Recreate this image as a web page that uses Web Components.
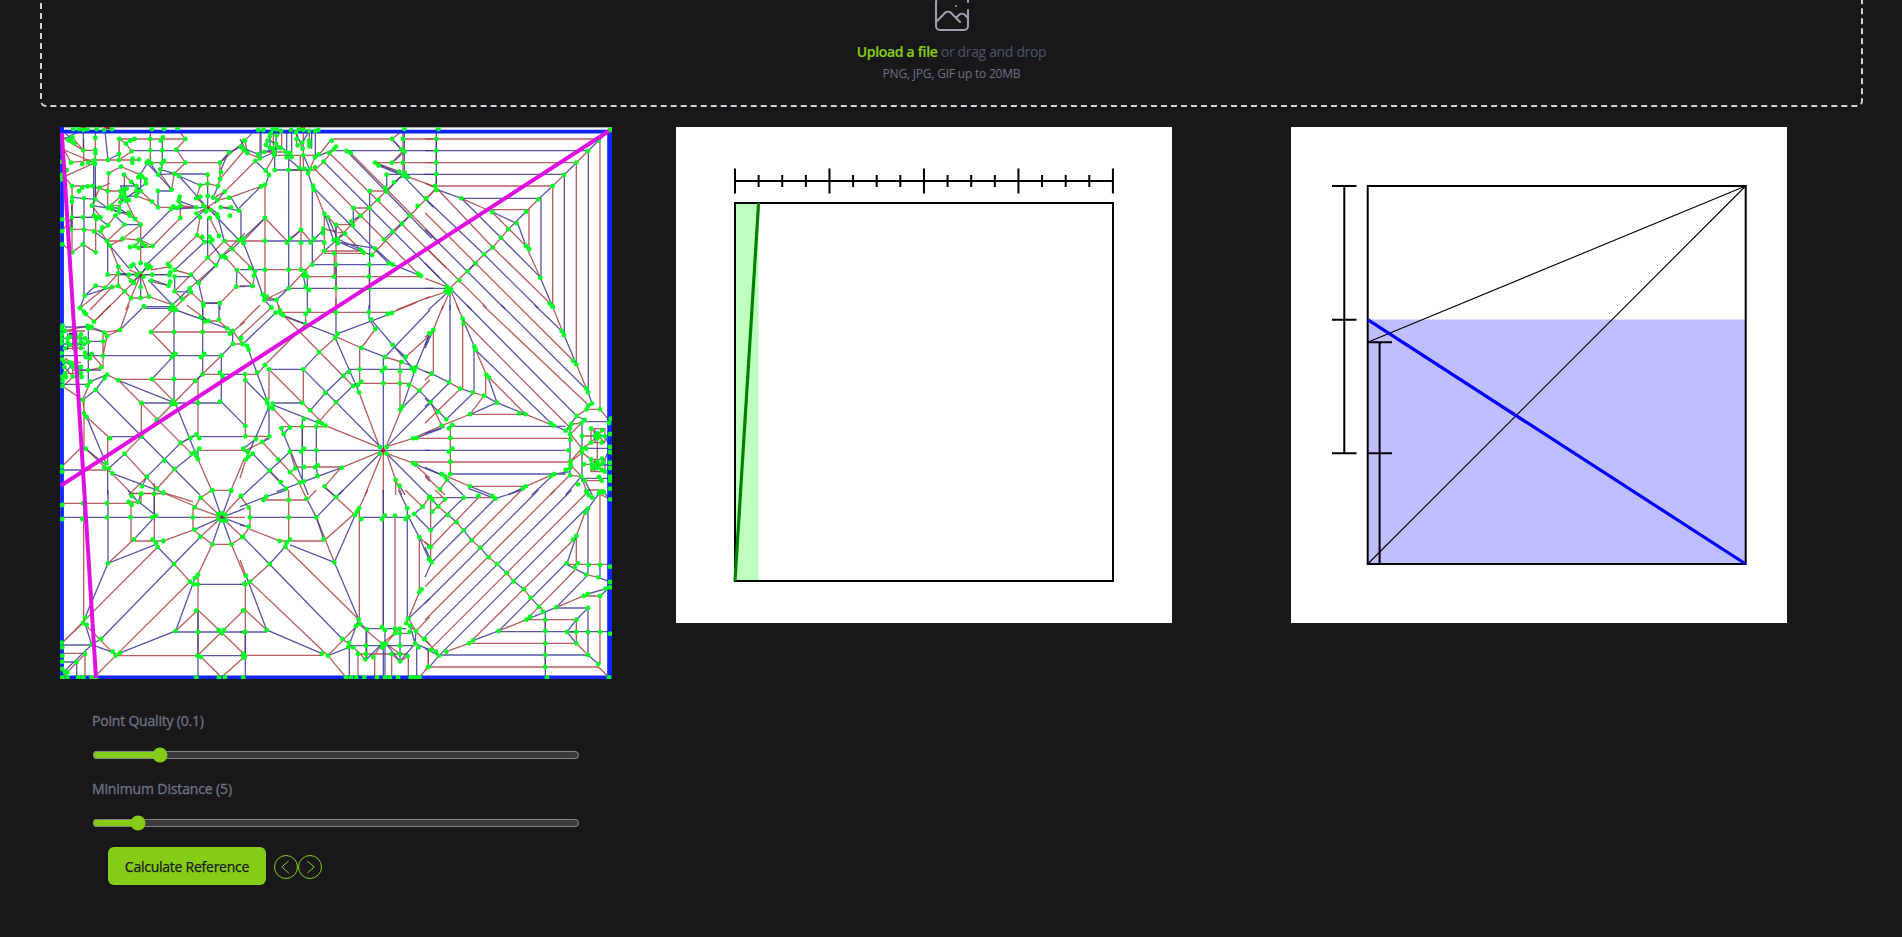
<!DOCTYPE html>
<html lang="en">
<head>
<meta charset="utf-8">
<title>Reference Finder</title>
<style>
html{background:#18181b;color-scheme:dark}
body{margin:0;background:#18181b;font-family:"Open Sans","Noto Sans",sans-serif;font-size:14px;line-height:20px;overflow:hidden;height:937px}
</style>
</head>
<body>
<reference-app></reference-app>
<script>
const define=(name,html,setup)=>customElements.define(name,class extends HTMLElement{
  connectedCallback(){
    if(this.shadowRoot)return;
    const t=document.createElement('template');
    t.innerHTML=typeof html==='function'?html(this):html;
    this.attachShadow({mode:'open'}).append(t.content.cloneNode(true));
    if(setup)setup(this);
  }
});

define('drop-zone',`<style>
:host{display:flex;flex-direction:column;align-items:center;justify-content:flex-end;box-sizing:border-box;height:127px;margin:-20px 39px 0 40px;border:2px dashed #d4d4d8;border-radius:6px;padding-bottom:23px}
svg{width:48px;height:48px;flex:none;color:#9ca3af}
.main{margin-top:4px;color:#4b5563;letter-spacing:-.34px;white-space:pre}
b{font-weight:600;color:#84cc16;letter-spacing:-.3px;-webkit-text-stroke:.2px #84cc16}
.hint{margin-top:4px;font-size:12px;line-height:16px;color:#6b7280;letter-spacing:-.2px}
</style>
<svg viewBox="0 0 48 48" fill="none" stroke="currentColor" stroke-width="2" stroke-linecap="round" stroke-linejoin="round"><path d="M28 8H12a4 4 0 00-4 4v20m32-12v8m0 0v8a4 4 0 01-4 4H12a4 4 0 01-4-4v-4m32-4l-3.172-3.172a4 4 0 00-5.656 0L28 28M8 32l9.172-9.172a4 4 0 015.656 0L28 28m0 0l4 4m4-24h8m-4-4v8m-12 4h.02"/></svg>
<div class="main"><b>Upload a file</b> or drag and drop</div>
<div class="hint">PNG, JPG, GIF up to 20MB</div>`);

/* Crease pattern, stored as 3x3 tiles of 185px at three units per pixel.
   r: mountain creases, b: valley creases, d: detected vertices. */
const tiles=[
{r:"M193 57H391L367 25M391 57L364 89L391 128M275 128H495M119 120H252M48 128L120 118M86 57V123M286 27V123M51 198V397L84 373L122 397M122 397V292M122 240V198M158 213V264M158 213L161 160M161 160L198 140L256 164M121 54V120M192 57V120M257 314V429M458 164V191M376 230V294L293 378M339 432L426 346M408 464L458 413M495 128V177L569 90M495 128L570 62M309 262H424M309 262L291 245L257 213M257 213L230 186L207 164M350 209L318 164M358 161L350 209M358 161L391 128M497 262H528M489 240L522 233L555 222M436 196L424 235M509 215L480 232M495 177L489 198L458 191L436 196M458 262L424 235M458 262L489 240M458 262L424 280M458 262L489 292M435 292L426 346M464 294L492 348M377 257L424 262M240 297L257 314L203 356M208 314L156 363L137 334M159 316L181 287M171 268L225 287M156 363L165 377L190 440V498M156 363H203M165 377L203 356M240 378L257 360L293 378M225 381H293M158 464H345M190 440L228 482M257 464L209 514L117 605M257 464L287 430M257 464L222 450M257 464L282 530M257 464L228 534L212 570M341 497L285 484M346 440L287 450M359 450L408 464L359 514L382 537M257 534L282 530L352 555M171 501L190 498L209 514L228 534H257M122 497L151 503L75 564M151 503L190 460M408 517L352 570M483 436L404 505M483 436L458 413L508 363L532 387M546 451L512 413M508 363H552M570 340L498 410M544 500L495 549L445 551M544 500L570 500M382 537L408 517L445 551M458 366L449 366L426 346M121 91L85 91L52 52M28 55L85 91M28 90L48 128M28 90L117 128M28 170L120 128M28 170L51 198H113L158 213H197M51 292H137L111 257L134 203M51 198V245M22 333L51 292M22 373L52 397M48 328H87M87 328L137 334L159 316M214 243L240 297M197 230L158 264M197 213V247M208 164V222M244 228L291 245M170 257H192M203 356L251 360M165 190L135 203M105 570L171 501M193 57L213 71L230 94L192 120L193 57",
b:"M230 92H522L495 157M358 162H458M116 128V292M85 30V91M121 27V54M159 120L150 34M159 120L192 102M322 62V123M87 235V527M51 245V328M158 363V464M257 164V213M257 501V534M458 294V413M309 213V262M558 272V360M309 213H350M257 360L355 262M274 434L448 270M359 450L449 366M372 168L445 250M372 168L436 196M471 276L552 360M489 292L508 363M489 198L472 240M458 191V228M509 215L480 250M552 272L497 262M528 233L552 272M522 97L495 128M522 97L558 80M458 262L348 267M458 262L489 280M48 328V292H127M87 235L121 238V132M87 235L51 232M121 238L158 264L111 257M158 264L192 277L221 278M181 287L208 314H257M127 292L159 316M117 334L156 363M165 377L222 445M190 464H345M257 464L222 464M257 464L228 489M257 464V501M257 464L292 464M257 464L278 434M257 464L235 433M190 460L257 464M89 527L171 501M89 527L122 497M359 464V514L408 517L404 505L352 555M267 560H352M359 470H408M341 497L292 480M352 555L280 480M431 489L483 436L498 410L466 366M498 410L532 387L564 355M546 451L544 500M495 549H445M445 551L431 489L408 464M495 549V570M75 564L89 527M28 35L58 70M28 55L85 30M316 148L358 161L310 164L281 123M350 209L275 128M281 123L256 164M316 164L324 123M273 190L197 247M244 198H197L214 243M229 186L257 213L244 228L197 230M171 264H192L215 206M240 297L192 265M196 247L244 213M425 262L371 243M251 384L272 378M458 262L458 228",
d:"55,27 72,27 98,27 125,27 147,30 171,27 291,27 327,27 367,25 48,63 58,70 52,52 40,60 85,91 121,54 121,100 121,90 193,57 192,102 213,71 226,62 239,57 230,94 286,57 286,91 322,91 318,62 324,52 391,57 364,89 391,128 327,123 320,130 281,123 290,130 275,128 252,118 233,116 192,120 198,140 232,128 159,120 119,120 116,128 120,132 100,128 82,132 48,128 85,30 161,160 207,164 256,164 262,170 250,172 310,164 316,148 358,161 372,168 458,164 498,157 495,128 522,97 558,80 567,90 567,62 495,177 458,191 436,196 489,198 509,215 522,233 528,262 552,272 525,287 489,292 464,294 435,292 424,280 424,262 424,235 436,230 458,228 474,232 487,240 497,262 487,283 455,265 445,257 452,275 467,270 374,230 371,243 377,257 367,264 355,259 348,267 376,294 350,209 309,213 309,262 291,245 257,213 273,190 272,178 229,186 244,198 244,213 244,228 215,206 208,208 197,213 208,222 197,230 210,234 214,243 222,240 196,247 170,257 158,264 171,268 192,265 192,277 181,287 221,278 225,287 240,297 257,314 208,314 159,316 142,322 137,334 117,334 87,329 48,328 51,292 84,292 117,287 127,292 137,292 124,298 111,257 121,238 87,235 51,245 52,232 51,198 72,213 82,203 98,199 113,198 134,203 158,213 20,125 20,165 20,178 35,150 22,298 22,333 22,373 52,397 84,373 122,397 156,363 165,377 203,356 251,360 262,370 240,378 225,381 251,384 272,378 293,378 257,429 235,433 228,439 222,464 190,460 190,440 158,464 228,482 237,489 257,501 289,482 292,464 287,441 274,434 278,445 245,465 256,460 265,470 339,432 345,440 346,457 343,465 359,450 359,470 346,485 341,497 408,464 359,514 382,537 408,517 404,505 431,489 122,497 151,503 171,501 190,498 209,514 228,534 257,534 282,530 267,560 352,555 358,566 89,527 75,564 426,346 442,351 464,350 492,348 449,366 466,366 472,360 508,363 458,413 498,410 512,413 505,408 483,436 532,387 552,360 564,355 566,370 546,451 544,500 495,549 445,551"},
{r:"M275 57H456L493 27M489 57H580M456 57L489 92L456 128M405 128H580M389 213H440M340 264H388M288 314H339M288 314V568M253 281V393H371M253 400H371M202 470H543M183 150V449M75 194V540M10 363H75M75 449H202M219 197L253 281M264 292L371 398M225 148L534 461M268 99L620 445M332 99L600 370M181 106V150M104 106H236L275 57M60 40V100M15 62L46 28M15 62L22 99L60 115M46 123L-46 215M63 199L0 222M104 106L77 152L87 165M146 150H225L251 125L288 80M190 30V144M225 112L204 160M75 294L10 363M75 294L141 363L183 330L212 363M253 393L202 445L146 505L73 540M283 400V470M388 505V434M396 405L371 398M288 360L494 158M405 128L478 155M504 171L585 200M489 27V167M-23 387L45 454L38 498M-9 451L38 498M109 540L119 568M80 530L109 540M470 570L570 530M100 40V106M125 40V84M170 30V76M208 30V86M72 96H155M396 405L589 205M253 327L315 341",
b:"M288 92H580M440 163H580M389 213V568M440 164V215M340 264V316M217 434H459M146 505H580M217 197V434M146 106V505M75 363H250M0 449H75M146 449V505M217 197L204 160M222 204L446 430M253 281L281 360M251 125L600 475M320 93L575 355M489 167L580 262M253 393L293 357L371 393M283 365L405 385L459 434L543 468M264 292L293 357M288 314V360M371 398L281 360M416 137L489 167L462 187M405 128L504 171M493 27V167M456 57L484 88L494 95L456 128M315 341L288 360M440 215L494 158M104 106V150H210L190 106M63 40V115M5 82L55 103M46 123L103 96M46 123L77 152M63 199L-3 265M10 355L75 294M10 368L42 450L73 540L94 563M141 368L183 330M212 368L253 327M75 199L87 165M38 498H0M146 505L109 540H73M202 470V568M190 467L197 501M288 434V505M90 33V96M108 40V106M120 40H95M140 33V112M155 33L155 111M168 37L188 86M207 33L188 67M215 33V86M226 33V112M72 96L123 84M150 99L90 62M140 112L178 144M225 112L282 88M0 57L22 99M362 287L334 304M432 358L509 287",
d:"55,30 70,30 93,40 98,28 110,28 123,33 110,46 90,48 153,30 168,37 190,30 207,33 235,30 226,33 177,27 170,57 187,67 173,76 188,86 208,62 208,70 208,78 83,62 78,75 108,70 90,83 100,85 115,82 122,84 72,96 103,96 137,96 150,99 103,106 140,112 155,111 60,115 55,103 46,123 15,62 5,82 14,90 22,99 190,106 225,112 236,103 268,99 282,88 288,80 275,62 104,150 146,150 77,152 87,165 63,199 75,194 178,144 193,147 210,147 225,142 204,160 251,125 320,93 332,99 405,128 416,137 456,57 489,57 493,27 484,88 494,95 456,128 489,128 478,155 494,158 489,167 504,171 440,164 462,187 436,204 440,215 389,213 415,240 388,264 340,264 362,287 334,304 339,316 288,314 315,341 250,327 249,340 281,360 293,357 293,370 253,281 264,292 219,197 222,210 75,294 183,330 75,363 10,355 10,368 141,368 151,356 183,368 212,368 222,356 253,368 253,393 283,400 362,389 371,398 396,405 405,385 432,358 458,335 486,311 509,287 533,258 558,235 217,434 288,434 388,434 446,430 459,434 534,461 543,468 387,470 282,470 202,470 190,467 196,458 197,501 207,510 146,505 288,505 388,505 183,449 146,449 75,449 30,444 45,454 42,467 38,498 68,524 80,530 73,540 109,540 94,563"},
{r:"M0 57H525V870M0 128H454V730M30 198H383V560M200 269H312V387M202 276L109 235M35 205L203 382L375 550M200 275L303 378M0 278L277 555M0 380L185 563M34 57V128M34 163V198M303 378L346 473M0 190L35 205L0 240M0 475L65 500M0 537L65 515M50 570L72 520M78 512L102 570M75 505L177 403M203 382L250 328M303 275L340 238M383 198L417 165M454 128L489 93",
b:"M0 92H490V817M0 163H418V645M109 235H348V473M34 27V205M35 208L109 235M109 235L228 353L347 473M0 235L177 403L340 565M0 328L240 567M0 430L75 505L140 570M275 310L202 276M278 310L303 378M346 473L383 560M0 505H65M10 570L65 520M75 510V570M128 454L152 430M177 403L203 382M250 328L303 275M340 238L383 198M417 165L454 128M489 93L553 30",
d:"40,27 34,57 34,92 34,128 34,162 30,198 35,210 4,235 109,235 202,276 303,378 312,387 346,473 374,550 383,560 65,500 62,514 72,520 78,508 70,505 75,515 103,481 128,454 152,430 177,403 203,382 228,353 250,328 275,310 303,275 340,238 383,198 417,165 454,128 489,93 520,62 555,30"},
{r:"M443 0V81M288 81H533M222 0L195 75L156 93M195 75L147 82M357 12L288 81L357 152M190 223H421M291 222L357 290M190 226L410 446M259 294V395M306 345L421 228L499 152M158 395V480M429 222V389M443 208H500M433 436H565M429 463L470 556H528L567 463M95 336L165 400M87 285V431M92 431L165 500L230 566H330M209 446L306 551L359 492M209 446L259 395L306 345M20 485L75 431M83 495H153M22 243L83 285L106 230M395 0L460 48H492L516 70M525 86L570 50M534 117H563L533 78M92 27L117 50L167 0M144 80V187L110 147M144 152L156 93M156 209L190 226M110 147H92M25 78H90M20 130H90M53 65V135M20 172H78M28 205H78M30 187L53 215M25 243L54 215M53 175V215M138 187L100 196H78M98 62L30 78M83 285L90 330M172 505L148 489M100 70L144 80M30 160L60 180M325 563L414 590M377 414L424 389M221 570L276 515",
b:"M20 152H499V290L570 362M357 15V297M443 81V156M443 81V208M267 4L195 75M267 10H352M357 152L291 222M190 226L350 290M122 255L435 570M259 294H495M165 395H259M158 490V570M363 300L420 440M503 208H570M433 395H570M95 336L153 475M92 431L153 480M172 505L325 563M162 490L209 446M276 515L377 414L406 399M359 492L424 440M22 495H83M156 209L122 255L83 285M100 109H144M55 195H138M22 238H97M100 70V240M363 15L516 70M492 0V44M533 78V117L499 152M533 78L516 70M110 66L147 82M92 27L75 9M443 0V37L460 48M20 100H90M20 117H90M38 85V135M78 88V135M65 80V130M22 163L53 186M22 215L54 175M78 186V216M106 230L156 209M357 222V290M429 430V463M424 389L406 399M421 228L443 208M30 66H98M276 515L261 544",
d:"75,9 87,20 92,27 117,50 98,62 110,66 100,70 147,82 156,93 144,109 195,75 267,4 352,4 357,15 345,12 363,15 288,81 357,81 443,81 437,37 449,50 460,48 445,2 492,44 516,70 533,78 525,86 558,99 534,117 563,117 144,152 350,156 362,147 357,147 438,156 448,147 499,152 495,203 503,213 443,208 421,228 357,222 291,222 190,226 156,209 149,220 138,187 122,255 106,230 97,242 83,285 87,325 95,336 92,431 99,196 100,110 110,147 92,156 105,160 90,100 88,117 90,143 23,62 30,78 20,88 20,101 20,115 30,130 20,145 38,100 45,95 45,120 38,112 78,88 72,97 78,110 78,129 65,118 20,72 22,163 28,172 45,173 53,186 28,187 30,205 22,215 33,216 53,215 78,186 78,205 80,216 68,200 66,188 23,228 23,243 54,175 259,294 350,297 362,297 354,287 429,294 495,290 306,345 165,400 259,395 209,446 153,475 148,489 162,490 172,505 328,467 359,492 377,414 406,399 424,389 433,399 433,431 410,446 420,442 424,454 429,463 276,515 261,544 306,551 259,566 325,563 472,556 528,556 20,485 22,500"},
{r:"M122 22H456L530 -8M237 142L286 99M130 31L339 243M288 95L364 129M435 156L485 171M406 72L364 129M359 129V235H507L538 257L570 225M87 193V283M190 193V294M87 193L256 362L420 428M357 262L420 430M124 365H256M98 310L150 365M16 208V394H88L67 411M75 180L197 58L122 31M0 95L94 8M0 60L60 0M116 0V20M288 -20V22M166 486H305L254 544M237 350L288 292M67 411L180 533M89 497L122 531M0 520L18 463M480 171V314M497 156L570 90M519 400L605 362M440 425L519 400M430 436V570M430 436L375 570M430 436L305 488M440 446L519 474M440 446L467 525L486 570M467 525V570M488 304L438 425M187 365V440M197 27V58M15 208H52L75 180M10 440L67 411M150 502L166 490L150 440M38 446L18 463M570 520L519 474M364 230L339 243",
b:"M130 31L286 92M293 86L443 30M190 193L237 142M288 22V86M387 0V40L406 72M393 43L458 120L523 195M364 129L435 156M485 171L570 205M286 99L357 262M327 193H514M87 193H190L425 430M98 294H187M98 300L256 362M187 342V530M87 310V394M16 226L80 290M21 123L80 283M85 310L18 463M107 23L9 117M229 365V487L233 513M305 488L110 560M305 488L192 529M211 316L256 264L327 195M288 292L339 243M10 570L150 440M38 446L138 551M131 387L205 570M124 370L131 387L150 365M150 436H570M430 156V436M430 436L295 570M430 436L570 576M440 425L570 295M435 156L570 15M528 187L488 304M528 187L570 85M538 257L570 290M538 257L481 314M530 399L605 370M528 479L605 510M479 542L495 570M48 402L10 431M67 411L89 400M80 290L88 308M497 156L458 120",
d:"94,8 107,23 120,16 122,25 130,31 197,27 207,16 197,58 288,22 387,22 393,43 443,27 456,24 406,72 293,86 286,99 237,142 364,129 458,120 435,156 497,156 485,171 190,193 87,193 75,180 52,202 15,208 16,226 327,201 310,213 359,193 364,230 354,240 339,243 357,262 426,198 435,189 430,235 480,198 514,190 528,187 523,198 480,235 507,240 538,257 481,314 488,304 256,264 288,292 211,316 187,294 80,283 82,294 88,308 98,296 98,310 192,342 187,365 234,351 245,355 256,362 229,365 124,370 150,368 131,387 88,394 48,402 67,411 16,363 16,394 10,431 22,440 38,446 18,463 25,455 89,497 114,463 150,440 183,440 192,431 229,436 150,502 166,490 192,486 225,487 233,481 233,513 305,488 254,544 180,533 192,529 122,531 138,551 420,426 440,426 420,446 440,446 519,400 530,399 519,474 528,479 467,525 479,542 3,100 9,117 21,123 26,134 568,85"},
{r:"M55 0L25 75V206M95 0L113 41V251M182 209V272M148 125L184 209M135 328H302L190 215M20 206L0 200M20 206L0 225M177 272L135 328L50 362M106 251L0 355M386 362L302 328M-25 400H435M-30 471H437M76 370V507M66 514L135 544H302L388 507M45 553L66 524M0 510L60 570M439 357L469 355M490 313H525L552 345M471 393H498M471 478H498M498 371H540V413H498ZM498 463H540V500H498ZM485 555H535M173 0L490 300M277 0L445 167M115 45L437 370M383 5L417 90M454 178L489 262M0 97L25 75M72 232L106 251M143 262L177 272M17 292L50 362M435 388H437L471 430L437 468M471 430L498 413M471 443L498 463M435 388L469 355M435 511L469 514L437 480M437 470L471 443M498 371L540 413M498 413L531 376M498 463L535 500M540 463L498 500M431 514L375 570M469 514L485 560M479 527L530 527M455 333L485 313M517 400V463",
b:"M75 0V232L0 305M147 125V262L64 343L0 280M113 41L148 125L152 135L386 362M190 218L216 293L135 328M216 293L302 328M15 85L0 120M25 75L0 130M72 364H422M0 436H431M76 507H422M60 365L0 385M0 487L60 514M135 544L200 570M302 544L250 570M388 507L320 570M435 370V511M471 350V530M475 350H555M475 520H555M125 0L455 333L479 345M229 0L489 258M329 0L410 78M417 90L454 178M489 262L501 295L490 302M72 232L20 206M106 251L143 262M177 272L216 293M422 377L455 333M422 495L435 490M386 362L422 377M510 371V413M510 463V500M498 393H555M498 480H555M471 430H555M469 514L422 570M479 527L502 570M66 524L115 570M0 515L15 530M540 394L555 426L540 463M382 508L435 500",
d:"113,41 116,56 148,125 152,135 184,209 192,218 216,293 177,272 143,262 106,251 72,232 20,206 15,85 25,75 17,292 40,321 64,343 50,362 72,370 82,360 135,328 283,325 302,328 377,355 386,362 422,377 435,370 439,357 455,333 469,355 479,345 485,313 490,302 501,295 525,313 489,262 484,250 454,178 444,167 417,90 410,78 383,5 76,399 82,431 72,440 76,470 76,507 50,507 60,514 66,524 45,553 135,544 293,551 302,544 377,514 388,507 435,388 437,404 471,393 431,436 471,430 484,431 471,443 437,468 422,495 435,490 435,511 437,480 477,478 469,514 479,527 459,538 498,371 531,376 517,385 510,393 525,393 517,400 498,413 530,413 540,394 557,341 552,354 555,387 555,426 555,442 498,463 531,461 500,478 517,470 510,480 525,480 535,473 517,490 502,490 531,495 540,500 555,473 555,489 555,515 522,516 530,527 555,527 555,551 485,560 525,560 535,562"},
{r:"M437 82H570M414 52V119L472 163H529L562 141M419 52L437 23L472 0M500 82L419 52M500 82L437 23M500 82L558 18M500 82L562 141M500 82L436 141M325 9L419 48M325 153L418 119M308 171L22 458M405 275L182 497L118 562M159 220L237 148M298 -20V148M228 45V153H325M22 40H228M86 40V399L182 497M357 222L405 275M362 423L429 360M429 254V500M472 163L429 254M529 163L570 260M429 360L565 490M427 497L565 362M182 497H427M438 501L500 562L565 503M22 490H90V562M22 458L84 399M22 562L90 492M258 12V36L221 36M230 10H325",
b:"M84 82H414M22 82H84M22 45V87M436 141L357 222L138 447M308 171L357 222M500 82L418 119M500 82L472 2M500 82L529 2M500 82L472 163M500 82L529 163M500 82L570 55M500 82L570 108M414 82H437M303 163L159 220V0M159 220L90 383M237 148L303 77L230 18M298 12V82M420 264L362 423L195 489M429 283H570M362 426H570M427 497H565M429 430V562M90 400L110 464L182 490M22 465H110M110 464L22 550M65 516V562M22 516H65M22 537L40 562M138 447L110 464M219 0L249 36L258 12M429 360V426",
d:"22,45 84,40 156,40 22,87 82,87 156,82 227,82 221,36 230,45 230,18 249,36 258,12 298,12 325,9 291,82 303,77 437,23 419,52 414,82 418,119 436,141 472,163 529,163 562,141 558,18 472,2 529,2 490,72 510,75 490,87 513,92 500,70 502,92 237,148 293,148 303,158 325,153 308,171 159,220 357,222 405,275 420,264 429,254 416,283 429,283 424,362 362,423 429,426 491,420 507,420 500,430 565,362 568,426 427,497 438,501 565,492 565,503 90,383 84,399 95,405 138,447 110,464 173,485 182,497 195,489 90,492 65,516 20,458 22,472 22,497 22,515 22,537 30,547 37,547 22,562 37,562 70,562 85,562 110,562 123,562 424,562 492,562 510,562 568,282"},
{r:"M30 50V110L7 141M30 118L119 153M136 171L356 388M30 275L264 497L318 562M0 210L18 257M16 270V500M16 360L80 420M89 222L30 275M70 30H200L229 0M146 0V148M119 153H251L345 70M200 26L180 -15M229 82L283 217M358 60V388M253 -10L345 75M465 77V430M430 0V411M383 0L357 55M495 0L548 50L568 22M538 142L570 171M538 142V307L505 386M528 423L570 380M0 496H246M264 497L356 402L426 461L480 416H465M354 492V562M354 492H503M404 501V562M455 492V562M505 492V562M340 472L376 508M378 418V514M426 461L400 501M438 461L465 430H509M511 408L570 465M565 480V531L538 562M307 447L340 472M26 52L0 18M455 492L480 514L503 499M480 492L438 461M505 386L528 423",
b:"M9 141L307 447M30 82H229L200 26M150 165L283 217L348 70M18 257L80 420L246 491M89 222L140 165M288 21L229 82L251 148M283 217L356 388L325 472M253 -10L288 21L310 0M360 82H505M430 0V411M502 55V395M475 0L502 55M523 72L570 120M538 142L570 215M505 386L570 325M264 497L327 472M381 416H499M325 467H525M328 472V562M380 418V508L426 461M430 473V562M480 416V514M530 472V562M438 461L480 514L525 461L570 480M511 408L525 461M0 426H80M0 283H16M0 50L79 20L140 0M26 110L0 105M435 561V420M16 426V562M528 423L525 461M523 72L548 50M505 80L538 142M381 418L361 402",
d:"3,18 26,52 30,82 26,110 9,141 18,257 30,275 16,283 10,362 80,420 16,426 10,492 15,500 10,562 79,20 70,30 146,30 146,82 119,153 140,158 150,148 136,171 89,222 200,26 229,82 251,148 283,217 288,21 345,75 351,65 357,55 364,87 426,87 435,77 465,77 497,87 505,80 523,72 502,55 548,50 568,22 538,142 568,208 568,171 538,307 545,298 505,386 499,400 511,408 356,388 361,402 348,408 381,418 426,411 435,420 465,416 480,416 465,430 480,430 509,426 528,423 552,447 525,461 536,472 480,467 438,461 426,461 426,473 432,467 378,467 327,459 325,472 340,472 307,447 354,492 378,492 376,508 400,501 455,492 480,492 503,499 480,514 246,491 264,497 318,562 333,562 349,562 373,562 411,562 435,562 450,562 474,562 512,562 525,562 538,562 565,531"},
{r:"M17 171L165 18M22 65L60 28M0 290L290 0M0 390L390 0M18 476L484 10M132 460L450 145M304 389L450 240M12 531H520L552 562M132 460H454V389H304M476 318H525V522M361 389V423M361 460V531M394 352L476 318M64 485L132 460M221 423L304 389M425 223H555M454 138V220M480 68L454 138M525 0V225M10 480V531L0 541M22 23H60M160 23H211M17 30V207M0 447L42 497M484 254L520 262M454 460L489 495M40 50L69 75M95 97L116 121M140 151L166 173M191 202L216 222M245 249L266 274M297 298L317 323M342 350L361 365M426 426H454M30 0L60 28M0 155L17 171M522 10L555 28M491 15L484 4",
b:"M17 121L116 23M20 217L211 26L290 0M0 340L340 0M0 440L440 0M42 497L489 50M221 423L425 218M394 352L484 260M42 495H489V354H394M221 425H555M361 365V562M454 389L426 426L454 460M489 354L454 389M489 495L520 522M394 352L304 389M489 312L555 292L525 318M145 451L221 423M425 223L454 138M425 223L484 254M489 56V254M520 262L555 276M525 225V262M12 532L42 497M0 475L42 497M0 262L20 217L0 172M60 23H160M130 -5L211 26M15 21L40 50M69 75L95 97M116 121L140 151M166 173L191 202M216 222L245 249M266 274L297 298M317 323L342 350M555 28L535 5M489 56L522 10",
d:"15,21 22,30 60,28 116,23 160,18 202,18 211,26 22,65 40,50 69,75 95,97 116,121 17,121 17,171 140,151 166,173 191,202 216,222 245,249 266,274 297,298 317,323 342,350 354,365 12,207 20,217 484,4 491,15 502,23 522,10 535,5 556,28 489,56 480,68 454,138 444,149 425,220 459,220 450,232 491,225 525,225 555,230 484,254 520,262 555,276 555,292 542,296 489,312 476,318 525,318 394,352 489,354 304,389 315,381 361,389 454,389 361,423 221,423 426,426 454,426 489,426 525,426 555,431 454,460 361,460 145,451 132,460 361,495 489,495 361,531 520,522 366,562 552,562 64,485 33,485 18,480 42,497 10,531 0,447"}];
const dots=s=>s.split(' ').map(p=>'M'+p+'h0').join('');
const at=i=>`<g transform="translate(${i%3*185-5} ${(i/3|0)*185-7}) scale(.3333)">`;

define('crease-pattern',()=>`<style>:host{display:block;width:552px;height:552px;background:#fff}svg{display:block}</style>
<svg width="552" height="552" fill="none" stroke-linecap="butt">
<g stroke="#a83c3c" stroke-opacity=".82" stroke-width="4">${tiles.map((t,i)=>at(i)+`<path d="${t.r}"/></g>`).join('')}</g>
<g stroke="#343492" stroke-opacity=".82" stroke-width="4">${tiles.map((t,i)=>at(i)+`<path d="${t.b}"/></g>`).join('')}</g>
<path d="M0 .5H552" stroke="#aaa"/>
<path d="M2 4V550M0 4.6H552" stroke="#1024ff" stroke-width="3.8"/>
<path d="M549.6 4V552" stroke="#1024ff" stroke-width="4.8"/>
<path d="M0 550.2H552" stroke="#1024ff" stroke-width="3.4"/>
<g stroke="#c2123a" stroke-width="2.4"><path d="M21 1h6M44 1h6M238 1h7"/></g>
<g stroke="#3a1a8a" stroke-width="2.6"><path d="M9 207h4M19 207h3M213 21.500h3" /></g>
<g stroke="#00ff22" stroke-width="14.600" stroke-linecap="round">${tiles.map((t,i)=>at(i)+`<path d="${dots(t.d)}"/></g>`).join('')}</g>
<g fill="#c2123a"><circle cx="323.300" cy="323.300" r="2"/><circle cx="148.300" cy="80.500" r="1.500"/><circle cx="81" cy="148" r="1.500"/><circle cx="161.500" cy="390.500" r="1"/></g>
<g stroke="#e010e0" stroke-width="4"><path d="M1.700 3L36 551M1 358.500L549 4"/></g>
<path d="M0 0h4v6h-4z" fill="#1024ff"/>
</svg>`);

const ruler=Array.from({length:17},(_,i)=>{const x=59+i*23.62;const h=i%4?6:12.500;return`M${x} ${54-h}V${54+h}`}).join('');
define('fold-step',el=>`<style>:host{display:block;width:496px;height:496px;background:#fff}svg{display:block}</style>
<svg width="496" height="496" fill="none" stroke="#000" stroke-width="2">${el.getAttribute('kind')==='divide'?`
<path d="M59 76H82.600V454H59z" fill="#bfffbf" stroke="none"/>
<path d="M59 54H437${ruler}"/><path d="M59 76H437V454H59z"/>
<path d="M59 454L82.600 76" stroke="#008000" stroke-width="3.200"/>`:`
<path d="M76.700 192.500H454.700V437H76.700z" fill="#bfbfff" stroke="none"/>
<path d="M76.700 59H454.700V437H76.700zM41 59H65.500M53.300 59V326M41 192.700H65.500M41 326.300H65.500M76.700 215.300H101M88.600 215.300V437M76.700 326.300H101"/>
<path d="M76.700 437L454.700 59L76.700 215.300" stroke-width="1.100"/>
<path d="M76.700 192.700L454.700 437" stroke="#00f" stroke-width="3.200"/>`}
</svg>`);

define('range-field',el=>`<style>
:host{display:flex;flex-direction:column;height:68px}
label{color:#6b7280;-webkit-text-stroke:.35px #6b7280;letter-spacing:${el.getAttribute('track')||0}px}
input{display:block;width:488px;height:16px;margin:16px 0 0;accent-color:#84cc16;color-scheme:dark}
</style><label><slot></slot></label><input type="range" min="0" max="1000" value="${el.getAttribute('value')}">`);

define('solid-button',`<style>:host{display:block}
button{width:158px;height:38px;border:0;border-radius:6px;padding:1px 0 0;background:#84cc16;color:#18181b;font:400 14px/20px "Open Sans","Noto Sans",sans-serif;-webkit-text-stroke:.25px #18181b;letter-spacing:-.25px;white-space:nowrap}</style><button><slot></slot></button>`);

define('arrow-button',el=>`<style>:host{display:block;width:24px;height:24px;margin-top:2px}svg{display:block}</style>
<svg width="24" height="24" viewBox="0 0 24 24" fill="none" stroke="#84cc16" stroke-width="1"><circle cx="12" cy="12" r="11.500"/><path d="${el.getAttribute('dir')==='left'?'M14.700 6L7.800 12L14.700 18':'M9.300 6L16.200 12L9.300 18'}"/></svg>`);

define('reference-app',`<style>
:host{display:block}
main{display:grid;grid-template-columns:616px 615px 496px;align-items:start;padding:20px 0 0 60px}
.controls{padding:32px 0 0 32px}
.actions{display:flex;align-items:center;padding-left:16px}
solid-button{margin-right:8px}
</style>
<drop-zone></drop-zone>
<main>
<section><crease-pattern></crease-pattern>
<div class="controls">
<range-field value="127" track="-.2">Point Quality (0.1)</range-field>
<range-field value="81" track="-.13">Minimum Distance (5)</range-field>
<div class="actions"><solid-button>Calculate Reference</solid-button><arrow-button dir="left"></arrow-button><arrow-button dir="right"></arrow-button></div>
</div></section>
<fold-step kind="divide"></fold-step>
<fold-step kind="locate"></fold-step>
</main>`);
</script>
</body>
</html>
